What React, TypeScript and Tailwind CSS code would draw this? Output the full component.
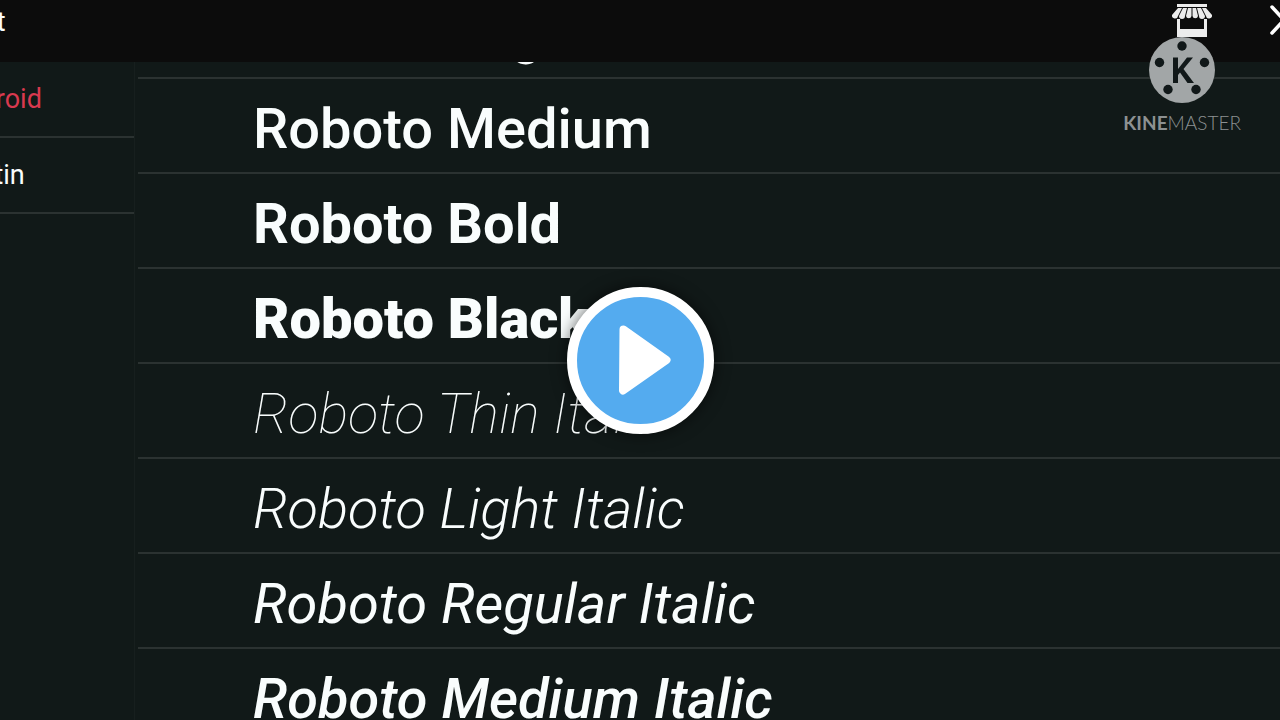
import React, { useState } from "react";

const categories = ["Android", "Latin"];

const fonts = [
  { name: "Roboto Regular", style: "font-normal" },
  { name: "Roboto Medium", style: "font-medium" },
  { name: "Roboto Bold", style: "font-bold" },
  { name: "Roboto Black", style: "font-black" },
  { name: "Roboto Thin Italic", style: "font-thin italic" },
  { name: "Roboto Light Italic", style: "font-light italic" },
  { name: "Roboto Regular Italic", style: "font-normal italic" },
  { name: "Roboto Medium Italic", style: "font-medium italic" },
];

function StoreIcon() {
  return (
    <svg width="40" height="34" viewBox="0 0 40 34" fill="#ececec">
      <rect x="5" y="0" width="30" height="3" />
      <path d="M6 4h4L6 12a3 3 0 0 1-6-1z" />
      <path d="M11 4h4l-2 8a3 3 0 0 1-6 0z" />
      <path d="M16 4h3.500v8a2.800 2.800 0 0 1-5.500 0z" />
      <path d="M20.500 4H24l2 8a2.800 2.800 0 0 1-5.500 0z" />
      <path d="M25 4h4l4 8a3 3 0 0 1-6 0z" />
      <path d="M30 4h4l6 7a3 3 0 0 1-6 1z" />
      <path d="M5 15h3v10h24V15h3v18H5z" />
    </svg>
  );
}

function CloseIcon() {
  return (
    <svg width="28" height="30" viewBox="0 0 28 30" fill="none" stroke="white" strokeWidth="3.5" strokeLinecap="round">
      <path d="M2 2l24 26M26 2L2 28" />
    </svg>
  );
}

function Watermark() {
  return (
    <div className="pointer-events-none absolute top-[37px] right-[39px] flex flex-col items-center gap-[6px] text-[#8d9192]">
      <svg width="66" height="66" viewBox="0 0 66 66">
        <circle cx="33" cy="33" r="33" fill="#a2a6a7" />
        <g fill="#111819">
          <circle cx="33" cy="9" r="4.700" />
          <circle cx="10.500" cy="25.500" r="4.700" />
          <circle cx="55.500" cy="25.500" r="4.700" />
          <circle cx="19" cy="52.500" r="4.700" />
          <circle cx="47" cy="52.500" r="4.700" />
          <path d="M24 20.500h5v11.500l9-11.500h6L34.500 32 45 46h-6.500l-7.500-10.500-2 2.500v8h-5z" />
        </g>
      </svg>
      <p className="font-[Lato,sans-serif] text-[19px] leading-[28px]">
        <span className="font-bold">KINE</span>
        <span className="font-light">MASTER</span>
      </p>
    </div>
  );
}

function App() {
  const [category, setCategory] = useState("Android");
  const [playing, setPlaying] = useState(false);

  return (
    <div className="relative flex h-screen flex-col overflow-hidden bg-[#111918] font-[Roboto,sans-serif] text-[#f9fdfd]">
      <header className="-mr-[18px] -ml-[50px] flex h-[62px] shrink-0 items-start bg-[#0c0c0c] pt-1">
        <h1 className="text-[28px] leading-[36px]">Font</h1>
        <button className="mr-[58px] ml-auto" aria-label="Store">
          <StoreIcon />
        </button>
        <button className="pt-px" aria-label="Close">
          <CloseIcon />
        </button>
      </header>

      <main className="flex min-h-0 flex-1">
        <nav className="-ml-[144px] w-[278px] shrink-0">
          {categories.map((item) => (
            <button
              key={item}
              className={`block h-[76px] w-full border-b-2 border-[#2b3231] text-center text-[27px] ${
                category === item ? "text-[#d9394f]" : ""
              }`}
              onClick={() => setCategory(item)}
            >
              {item}
            </button>
          ))}
        </nav>

        <div className="w-1 shrink-0 border-l border-[#171f1e]" />

        <ul className="flex-1 overflow-hidden">
          {fonts.map((font, i) => (
            <li
              key={font.name}
              className={`h-[95px] border-b-2 border-[#2b3231] ${i === 0 ? "-mt-[78px]" : ""}`}
            >
              <button className={`size-full pt-[7px] pl-[115px] text-left text-[56px] leading-[64px] whitespace-nowrap ${font.style}`}>
                {font.name}
              </button>
            </li>
          ))}
        </ul>
      </main>

      <Watermark />

      <div className="pointer-events-none absolute inset-0 flex items-center justify-center">
        <button
          className="pointer-events-auto flex size-[147px] items-center justify-center rounded-full border-10 border-white bg-[#54abef] shadow-[0_0_16px_rgba(0,0,0,0.6)]"
          aria-label={playing ? "Pause" : "Play"}
          onClick={() => setPlaying(!playing)}
        >
          <svg className="ml-[10px]" width="52" height="70" viewBox="0 0 52 70" fill="white" stroke="white" strokeWidth="8" strokeLinejoin="round">
            <path d="M4.500 4.500L47.500 35 4 65.500z" />
          </svg>
        </button>
      </div>
    </div>
  );
}

export default App;
